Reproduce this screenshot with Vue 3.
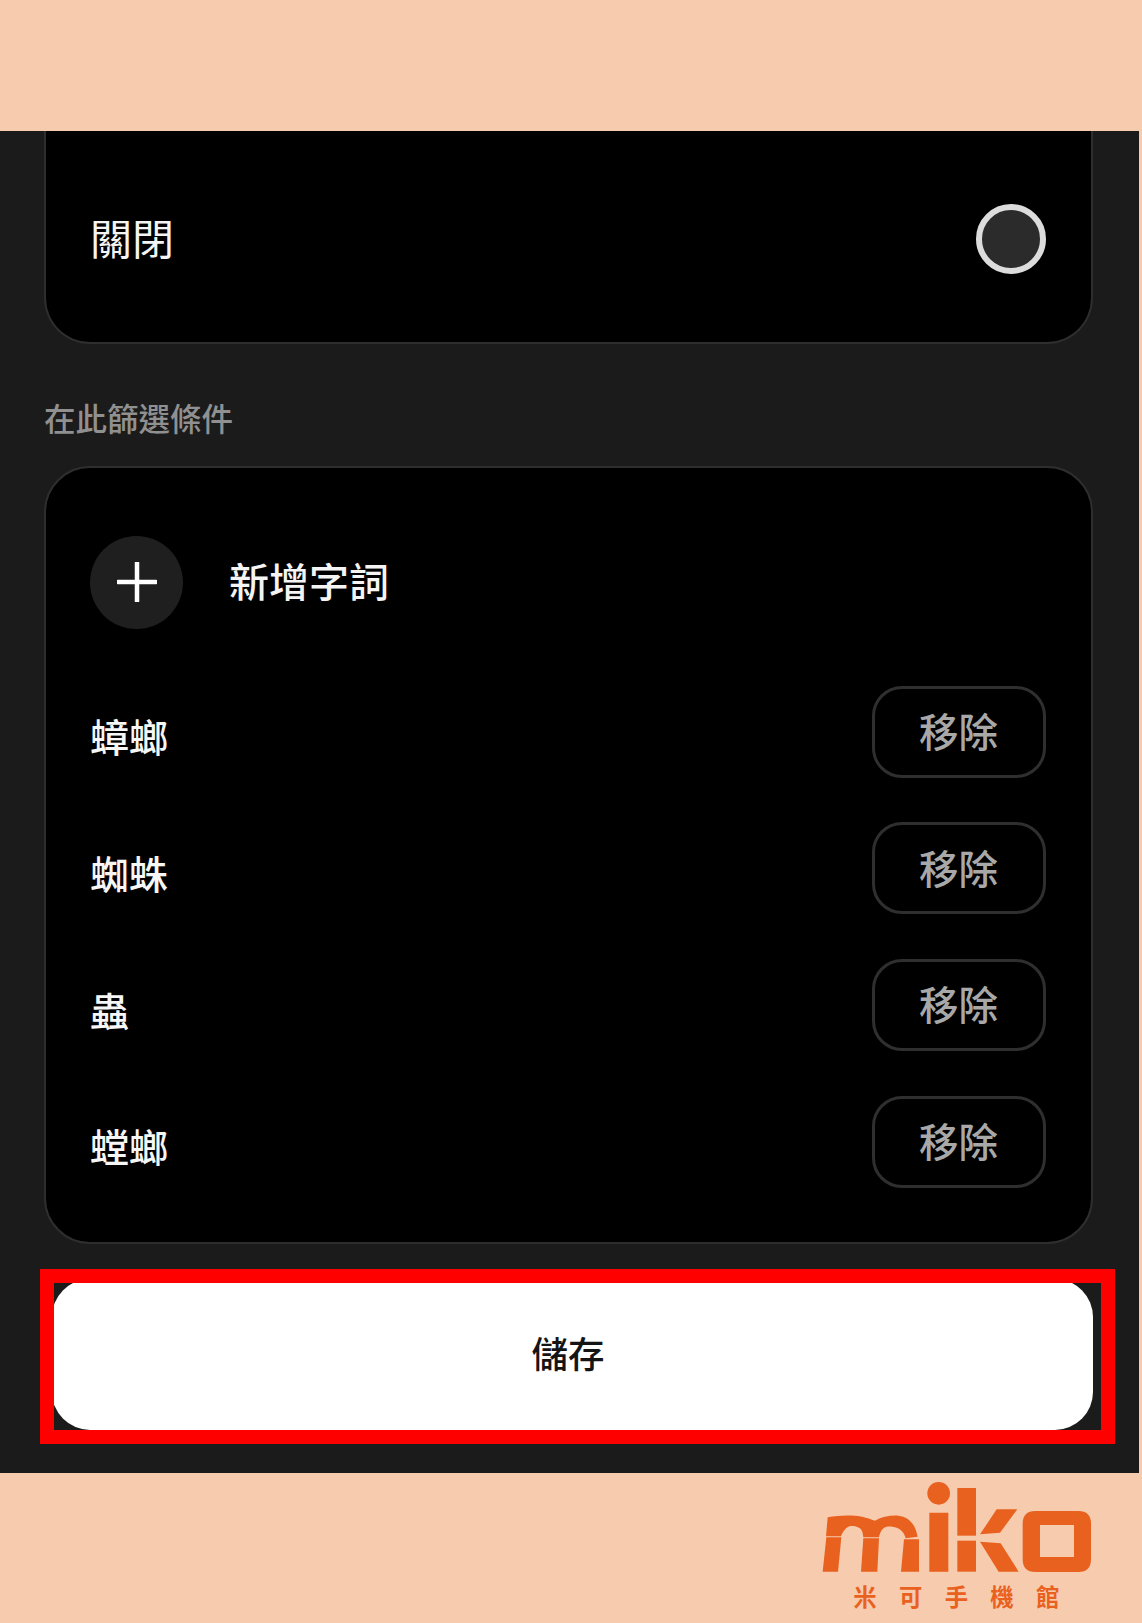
<script setup>
const words = ['蟑螂', '蜘蛛', '蟲', '螳螂']
</script>

<template>
  <div class="page">
    <div class="band top"></div>
    <main class="phone">
      <section class="card first">
        <span class="off">關閉</span>
        <span class="radio"></span>
      </section>
      <h2 class="label">在此篩選條件</h2>
      <section class="card second">
        <div class="add">
          <span class="plus">
            <svg width="40" height="40" viewBox="0 0 40 40"><path d="M20 1v38M1 20h38" stroke="#fff" stroke-width="4.5" stroke-linecap="round" fill="none"/></svg>
          </span>
          <span class="add-text">新增字詞</span>
        </div>
        <div v-for="w in words" :key="w" class="row">
          <span class="word">{{ w }}</span>
          <button class="remove">移除</button>
        </div>
      </section>
      <div class="highlight">
        <button class="save">儲存</button>
      </div>
    </main>
    <footer class="band bottom">
      <svg class="logo" width="300" height="150" viewBox="0 9 900 450">
        <g fill="#e9611f">
          <path d="M83 142C110 137 135 135 165 137C190 139 205 145 225 152C245 140 270 136 295 137C325 140 345 160 353 200L317 205C313 190 305 178 285 172C272 168 265 170 260 170C248 172 240 185 237 202L190 202C188 185 186 175 170 170C165 168 155 168 150 168C138 172 128 185 123 199L78 199Z"/>
          <path d="M79 202H124L114 305H68Z"/>
          <path d="M190 205H237L232 305H183Z"/>
          <path d="M312 208H357V305H303Z"/>
          <circle cx="416" cy="70" r="34"/>
          <path d="M388 128H445V305H388Z"/>
          <path d="M472 54H528V197H472Z"/>
          <path d="M472 212H528V305H472Z"/>
          <path d="M590 118H652L600 188L540 193Z"/>
          <path d="M540 215L602 220L656 305H596Z"/>
          <path fill-rule="evenodd" d="M706 123H835Q873 123 873 161V268Q873 306 835 306H706Q668 306 668 268V161Q668 123 706 123ZM720 165V261H822V165Z"/>
        </g>
        <text x="160" y="408" class="logo-text">米可手機館</text>
      </svg>
    </footer>
  </div>
</template>

<style scoped>
.page {
  width: 1142px;
  height: 1623px;
  background: #f7cbad;
  font-family: "Noto Sans CJK TC", "Noto Sans", sans-serif;
  overflow: hidden;
}
.top { height: 131px; }
.phone {
  width: 1139px;
  height: 1342px;
  box-sizing: border-box;
  background: #1b1b1b;
  padding: 0 46px 0 44px;
  display: flex;
  flex-direction: column;
}
.card {
  background: #000;
  border: 2px solid #2e2e2e;
  border-radius: 46px;
  box-sizing: border-box;
}
.first {
  height: 213px;
  border-top: 0;
  border-radius: 0 0 46px 46px;
  padding: 5px 45px 0 45px;
  display: flex;
  align-items: center;
  justify-content: space-between;
}
.off {
  color: #f4f4f4;
  font-size: 42px;
  font-weight: 400;
  line-height: 1;
  padding-bottom: 4px;
  margin-left: -1px;
}
.radio {
  width: 70px;
  height: 70px;
  box-sizing: border-box;
  border-radius: 50%;
  border: 6px solid #dcdcdc;
  background: #2b2b2b;
}
.label {
  margin: 0;
  height: 122px;
  box-sizing: border-box;
  padding-top: 50px;
  color: #909090;
  font-size: 31.5px;
  font-weight: 500;
  line-height: 46px;
}
.second {
  height: 778px;
  padding: 68px 45px 0;
  display: flex;
  flex-direction: column;
  gap: 44.7px;
}
.add {
  display: flex;
  align-items: center;
  gap: 46px;
  height: 92px;
  margin-bottom: 13px;
}
.plus {
  width: 93px;
  height: 93px;
  flex: none;
  margin-left: -1px;
  border-radius: 50%;
  background: #1f1f1f;
  display: flex;
  align-items: center;
  justify-content: center;
}
.add-text {
  color: #f4f4f4;
  font-size: 40px;
  font-weight: 500;
  line-height: 1;
  padding-bottom: 4px;
}
.row {
  display: flex;
  justify-content: space-between;
  align-items: center;
  height: 92px;
}
.word {
  color: #f6f6f6;
  font-size: 39px;
  font-weight: 500;
  line-height: 1;
  padding-top: 8px;
  margin-left: -1px;
}
.remove {
  width: 174px;
  height: 92px;
  box-sizing: border-box;
  border: 3px solid #2f2f2f;
  border-radius: 30px;
  background: transparent;
  color: #a8a8a8;
  font: 500 39.5px/1 "Noto Sans CJK TC", sans-serif;
  padding: 0 1px 4px 0;
}
.highlight {
  margin: 25px -22px 0 -4px;
  height: 175px;
  box-sizing: border-box;
  border: 14px solid #fe0000;
  padding-right: 8px;
  overflow: hidden;
}
.save {
  display: block;
  width: calc(100% + 2px);
  height: calc(100% + 4px);
  margin: -4px 0 0 -2px;
  border: 0;
  padding: 0 9px 2px 0;
  border-radius: 38px;
  background: #fff;
  color: #141414;
  font: 500 36.5px/1 "Noto Sans CJK TC", sans-serif;
}
.bottom {
  height: 150px;
  display: flex;
  justify-content: flex-end;
  padding-right: 42px;
}
.logo-text {
  font-family: "Noto Sans CJK TC", sans-serif;
  font-size: 70px;
  font-weight: 700;
  letter-spacing: 67px;
  fill: #e9611f;
}
</style>
